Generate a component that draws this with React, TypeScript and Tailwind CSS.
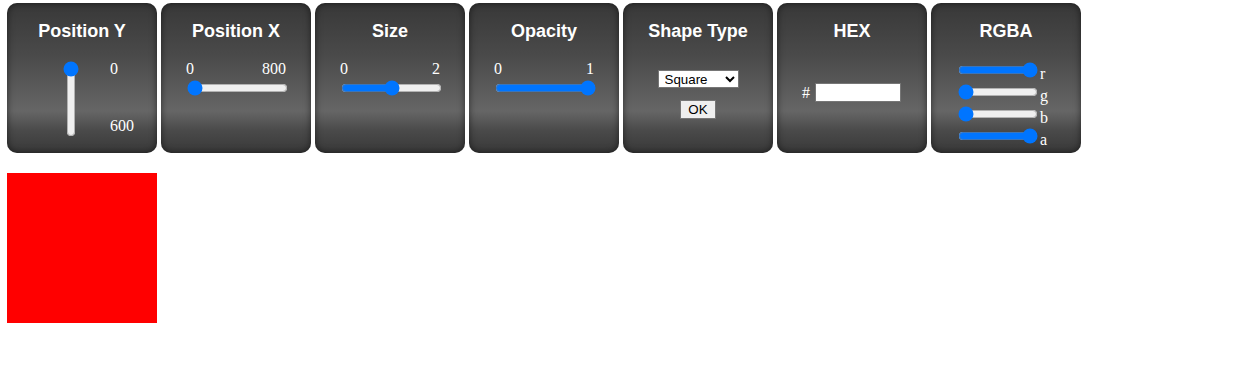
import React from "react";

const panel =
  "w-[150px] h-[150px] shrink-0 rounded-[10px] bg-[linear-gradient(to_bottom,#383838_0%,#4a4a4a_35%,#666666_72%,#4a4a4a_85%,#383838_100%)] shadow-[inset_0_0_7px_rgba(0,0,0,0.55)] flex flex-col items-center text-white";
const title =
  "mt-[17px] h-[22px] leading-[22px] text-[18px] font-bold font-['Liberation_Sans',Arial,sans-serif] text-center";
const serif = "font-['Liberation_Serif','Times_New_Roman',serif] text-[16px] leading-[18px]";

function HRange({ min, max, value }: { min: string; max: string; value: number }) {
  return (
    <div className="mt-[18px] w-[100px] flex flex-col">
      <div className={`flex justify-between ${serif}`}>
        <span>{min}</span>
        <span>{max}</span>
      </div>
      <input
        type="range"
        min={Number(min)}
        max={Number(max)}
        step="any"
        defaultValue={value}
        className="mt-[2px] ml-[1px] w-[101px] h-4 block"
      />
    </div>
  );
}

export default function App() {
  return (
    <div className="pl-[7px] pt-[3px]">
      <div className="flex gap-[4px]">
        <div className={panel}>
          <div className={title}>Position Y</div>
          <div className="mt-[18px] w-full flex items-start pl-[55px]">
            <input
              type="range"
              min={0}
              max={600}
              defaultValue={0}
              className="[writing-mode:vertical-lr] w-4 h-[76px] mt-[1px] ml-[1px] block"
            />
            <div className={`ml-[31px] h-[75px] flex flex-col justify-between ${serif}`}>
              <span>0</span>
              <span>600</span>
            </div>
          </div>
        </div>
        <div className={panel}>
          <div className={title}>Position X</div>
          <HRange min="0" max="800" value={0} />
        </div>
        <div className={panel}>
          <div className={title}>Size</div>
          <HRange min="0" max="2" value={1} />
        </div>
        <div className={panel}>
          <div className={title}>Opacity</div>
          <HRange min="0" max="1" value={1} />
        </div>
        <div className={panel}>
          <div className={title}>Shape Type</div>
          <select
            defaultValue="square"
            className="mt-[28px] w-[81px] h-[18px] bg-white text-black border border-[#767676] text-[13.33px] font-['Liberation_Sans',Arial,sans-serif] pl-[2px]"
          >
            <option value="square">Square</option>
            <option value="circle">Circle</option>
            <option value="triangle">Triangle</option>
          </select>
          <button className="mt-[12px] w-[36px] h-[19px] bg-[#efefef] text-black border border-[#767676] text-[13.33px] leading-[15px] font-['Liberation_Sans',Arial,sans-serif]">
            OK
          </button>
        </div>
        <div className={panel}>
          <div className={title}>HEX</div>
          <div className="mt-[41px] w-full flex items-center pl-[25px]">
            <span className={serif}>#</span>
            <input
              type="text"
              className="ml-[5px] w-[86px] h-[19px] bg-white border border-[#767676] text-black text-[13px]"
            />
          </div>
        </div>
        <div className={panel}>
          <div className={title}>RGBA</div>
          <div className="mt-[17px] w-full pl-[27px] flex flex-col">
            {[
              ["r", 255],
              ["g", 0],
              ["b", 0],
              ["a", 1],
            ].map(([l, v]) => (
              <div key={l as string} className="h-[22px] flex items-center">
                <input
                  type="range"
                  min={0}
                  max={l === "a" ? 1 : 255}
                  step="any"
                  defaultValue={v as number}
                  className="w-[80px] h-4 block"
                />
                <span className={`ml-[2px] pt-[8px] ${serif}`}>{l}</span>
              </div>
            ))}
          </div>
        </div>
      </div>
      <div className="mt-[20px] w-[150px] h-[150px] bg-[#ff0000]" />
    </div>
  );
}
